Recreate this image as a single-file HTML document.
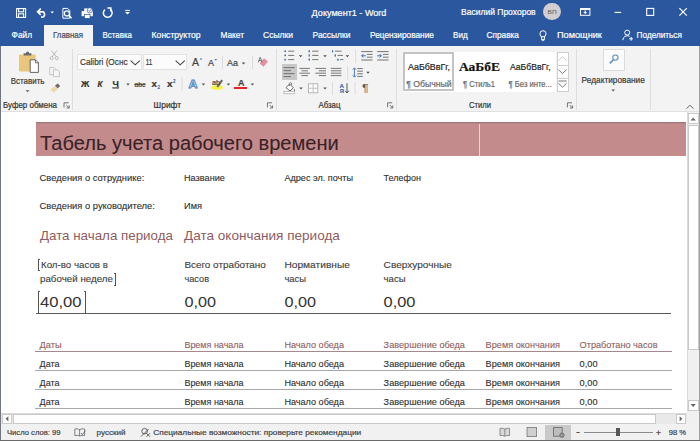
<!DOCTYPE html>
<html lang="ru"><head><meta charset="utf-8"><title>Документ1 - Word</title>
<style>
html,body{margin:0;padding:0;background:#fff}
#w{position:relative;width:700px;height:441px;overflow:hidden;background:#fff}
.t{-webkit-text-stroke:0.2px;position:absolute;white-space:nowrap;transform-origin:0 50%;display:block}
.r{position:absolute}
#ic,#tx{position:absolute;left:0;top:0;width:700px;height:441px}
#tx text{font-family:'Liberation Sans',sans-serif;white-space:pre}
#tx text.s{font-family:'Liberation Serif',serif}
</style></head><body><div id="w">
<div class="r" style="left:0px;top:0px;width:700px;height:46px;background:#2a579d;"></div>
<div class="r" style="left:0px;top:46px;width:700px;height:65px;background:#f3f3f3;"></div>
<div class="r" style="left:0px;top:111px;width:700px;height:1px;background:#e0e0e0;"></div>
<div class="r" style="left:44px;top:25px;width:49px;height:22px;background:#f3f3f3;"></div>
<div class="r" style="left:543.2px;top:2.9px;width:17.6px;height:17.6px;background:#d2ced0;border-radius:50%"></div>
<div class="r" style="left:71.5px;top:49px;width:1px;height:60.5px;background:#dedede;"></div>
<div class="r" style="left:275.6px;top:49px;width:1px;height:60.5px;background:#dedede;"></div>
<div class="r" style="left:395.6px;top:49px;width:1px;height:60.5px;background:#dedede;"></div>
<div class="r" style="left:576px;top:49px;width:1px;height:60.5px;background:#dedede;"></div>
<div class="r" style="left:650.4px;top:49px;width:1px;height:60.5px;background:#dedede;"></div>
<div class="r" style="left:77.3px;top:54px;width:65px;height:16px;background:#fcfcfc;border:1px solid #e2e2e2;box-sizing:border-box"></div>
<div class="r" style="left:143.3px;top:54px;width:44px;height:16px;background:#fcfcfc;border:1px solid #e2e2e2;box-sizing:border-box"></div>
<div class="r" style="left:234.4px;top:86.6px;width:12.6px;height:2.6px;background:#e8202a;"></div>
<div class="r" style="left:211px;top:84.5px;width:12px;height:5.5px;background:#f4f24e;border-radius:50%"></div>
<div class="r" style="left:403px;top:52px;width:153px;height:40px;background:#fff;"></div>
<div class="r" style="left:403px;top:52px;width:50.5px;height:38.6px;background:#fff;border:2px solid #c4c4c4;box-sizing:border-box"></div>
<div class="r" style="left:556.5px;top:52px;width:12px;height:40px;background:#fff;border:1px solid #cfcfcf;box-sizing:border-box"></div>
<div class="r" style="left:556.5px;top:64.5px;width:12px;height:1px;background:#cfcfcf;"></div>
<div class="r" style="left:556.5px;top:78px;width:12px;height:1px;background:#cfcfcf;"></div>
<div class="r" style="left:602.5px;top:48.5px;width:22.5px;height:22px;background:#fbfbfb;border:1px solid #dcdcdc;box-sizing:border-box"></div>
<div class="r" style="left:281.5px;top:64px;width:15.5px;height:16px;background:#c8c8c8;"></div>
<div class="r" style="left:0px;top:112px;width:700px;height:301px;background:#fff;"></div>
<div class="r" style="left:35.5px;top:122px;width:650px;height:34px;background:#c48b8d;"></div>
<div class="r" style="left:479px;top:122px;width:1px;height:34px;background:#ecd9d9;"></div>
<div class="r" style="left:35.5px;top:122px;width:650px;height:1px;background:#a07678;"></div>
<div class="r" style="left:35.5px;top:123px;width:650px;height:1px;background:#b98688;"></div>
<div class="r" style="left:36px;top:313px;width:635px;height:1px;background:#5a5a5a;"></div>
<div class="r" style="left:38.4px;top:259px;width:2px;height:11.5px;border-left:1px solid #555;border-top:1px solid #555;border-bottom:1px solid #555;box-sizing:border-box"></div>
<div class="r" style="left:113.5px;top:273px;width:2px;height:13px;border-right:1px solid #555;border-top:1px solid #555;border-bottom:1px solid #555;box-sizing:border-box"></div>
<div class="r" style="left:38.4px;top:291px;width:2px;height:22.5px;border-left:1px solid #555;border-top:1px solid #555;border-bottom:1px solid #555;box-sizing:border-box"></div>
<div class="r" style="left:83.5px;top:291px;width:2px;height:22.5px;border-right:1px solid #555;border-top:1px solid #555;border-bottom:1px solid #555;box-sizing:border-box"></div>
<div class="r" style="left:35px;top:351px;width:637px;height:1px;background:#a58a8d;"></div>
<div class="r" style="left:35px;top:370px;width:637px;height:1px;background:#a8a8a8;"></div>
<div class="r" style="left:35px;top:389px;width:637px;height:1px;background:#a8a8a8;"></div>
<div class="r" style="left:35px;top:408px;width:637px;height:1px;background:#a8a8a8;"></div>
<div class="r" style="left:687px;top:112px;width:12px;height:301px;background:#f0f0f0;border-left:1px solid #dadada;box-sizing:border-box"></div>
<div class="r" style="left:688px;top:113px;width:10.5px;height:11px;background:#fff;border:1px solid #c9c9c9;box-sizing:border-box"></div>
<div class="r" style="left:688px;top:125px;width:10.5px;height:224.5px;background:#fff;border:1px solid #c9c9c9;box-sizing:border-box"></div>
<div class="r" style="left:688px;top:400px;width:10.5px;height:10.5px;background:#fff;border:1px solid #c9c9c9;box-sizing:border-box"></div>
<div class="r" style="left:1px;top:413px;width:686px;height:11px;background:#e9e9e9;border-top:1px solid #dadada;box-sizing:border-box"></div>
<div class="r" style="left:2px;top:414px;width:10px;height:9.5px;background:#fff;border:1px solid #c9c9c9;box-sizing:border-box"></div>
<div class="r" style="left:12.5px;top:414px;width:643px;height:9.5px;background:#fff;border:1px solid #c9c9c9;box-sizing:border-box"></div>
<div class="r" style="left:675.5px;top:414px;width:10.5px;height:9.5px;background:#fff;border:1px solid #c9c9c9;box-sizing:border-box"></div>
<div class="r" style="left:687px;top:411px;width:13px;height:13px;background:#f0f0f0;"></div>
<div class="r" style="left:0px;top:424px;width:700px;height:17px;background:#f1f1f1;"></div>
<div class="r" style="left:545.4px;top:424.5px;width:25.6px;height:15.5px;background:#c9c9c9;"></div>
<div class="r" style="left:583.8px;top:432.3px;width:69.2px;height:1px;background:#8a8a8a;"></div>
<div class="r" style="left:615.8px;top:427.6px;width:3.8px;height:8.8px;background:#555;"></div>
<div class="r" style="left:0px;top:46px;width:1px;height:395px;background:#70757f;"></div>
<div class="r" style="left:699px;top:46px;width:1px;height:395px;background:#a0a0a0;"></div>
<div class="r" style="left:0px;top:440px;width:700px;height:1px;background:#6a6a6a;"></div>
<svg id="ic" viewBox="0 0 700 441" width="700" height="441" fill="none" stroke-linecap="butt">
<!-- title bar QAT -->
<g stroke="#fff" stroke-width="1.1" fill="none">
<rect x="16.6" y="8.6" width="9" height="8.8"/>
<rect x="18.6" y="8.6" width="5" height="3.2" fill="#2a579d"/>
<rect x="18.6" y="13.8" width="5" height="3.6" fill="#2a579d"/>
<path d="M38.2 11.8 H43.2 A3.4 3.2 0 0 1 43.2 17 H41" stroke-width="1.7"/>
<path d="M40.8 8.6 L37.6 11.8 L40.8 15" stroke-width="1.7"/>
<path d="M50.4 11.6 H54 L52.2 13.6 Z" fill="#fff" stroke="none"/>
<path d="M62.9 8.4 H67.6 L69.8 10.6 V18.2 H62.9 Z" stroke-width="1"/>
<circle cx="66.9" cy="13.4" r="2.5" fill="#2a579d" stroke-width="1.2"/>
<path d="M68.7 15.3 L71.6 18.3" stroke-width="1.4"/>
<!-- quick print -->
<rect x="82" y="11.6" width="10.4" height="4.2" fill="#fff" stroke-width="0.8"/>
<rect x="84.2" y="8.4" width="5.4" height="3.4" fill="#fff" stroke="none"/>
<rect x="84.6" y="14.6" width="5.4" height="3.8" fill="#fff" stroke="#2a579d" stroke-width="0.7"/>
<circle cx="89.8" cy="10.4" r="2.6" fill="#fff" stroke="#2a579d" stroke-width="0.7"/>
<path d="M88.6 10.4 L89.5 11.4 L91.1 9.3" stroke="#2a579d" stroke-width="0.8"/>
<!-- repeat -->
<path d="M104.9 9.6 A4.4 4.4 0 1 0 110.3 9.4" stroke-width="1.5"/>
<path d="M107.4 8 H110.9 V11.6" stroke-width="1.4"/>
<!-- customize -->
<path d="M125.2 10.4 H129.8" stroke-width="1"/>
<path d="M125 12 H130 L127.5 14.6 Z" fill="#fff" stroke="none"/>
<!-- window controls -->
<rect x="580.5" y="8.5" width="9.4" height="6.8" stroke-width="1"/>
<path d="M580.5 9.2 H589.9" stroke-width="1.6"/>
<path d="M583.2 12 H587.2 L585.2 14 Z" fill="#fff" stroke="none"/>
<path d="M585.2 10.4 V12.4" stroke-width="1.2"/>
<path d="M614.6 12.4 H621.2" stroke-width="1.1"/>
<rect x="646.7" y="8.4" width="7" height="7" stroke-width="1.1"/>
<path d="M679.4 8.2 L686.8 15.6 M686.8 8.2 L679.4 15.6" stroke-width="1.2"/>
<!-- bulb -->
<circle cx="543" cy="33.8" r="3.1" stroke-width="1"/>
<path d="M541.6 36.4 V39.6 H544.4 V36.4" stroke-width="1" />
<path d="M541.8 40.6 H544.2" stroke-width="0.8"/>
<!-- share person -->
<circle cx="627.2" cy="32.6" r="2.5" stroke-width="1"/>
<path d="M622.8 40.2 A4.6 4.6 0 0 1 629.5 36.2" stroke-width="1"/>
<path d="M629.2 38.8 H633 M631.1 36.9 V40.7" stroke-width="1"/>
</g>

<rect x="19" y="54.6" width="16.6" height="17" rx="1" fill="#eac67c" stroke="none"/>
<path d="M23.6 55.4 V53.2 H26 A1.6 1.6 0 0 1 29.2 53.2 H31.4 V55.4 Z" fill="#6a6a6a" stroke="none"/>
<path d="M30.2 59.8 H35.4 L38.4 62.8 V72.4 H30.2 Z" fill="#fff" stroke="#555" stroke-width="0.9"/>
<path d="M35.4 59.8 V62.8 H38.4" fill="none" stroke="#555" stroke-width="0.8"/>
<path d="M25.7 90.2 H29.3 L27.5 92.2 Z" fill="#555" stroke="none"/>
<g stroke="#b4b4b4" stroke-width="0.9" fill="none"><path d="M51.4 50.6 L56.6 57 M57 50.6 L51.8 57"/><circle cx="51.6" cy="58.2" r="1.5"/><circle cx="56.8" cy="58.2" r="1.5"/></g>
<g stroke="#b9b9b9" stroke-width="0.8" fill="#f6f6f6"><path d="M49.8 67.4 H54 L55.8 69.2 V74.6 H49.8 Z"/><path d="M53.4 69.8 H57.6 L59.4 71.6 V76.6 H53.4 Z"/></g>
<g><path d="M50.4 89.6 L54.8 86 L57.6 89.2 L53.6 92.8 Z" fill="#ecd9a6" stroke="none"/><path d="M55 85.6 L57.8 83.4 L60.2 86 L57.6 88.6 Z" fill="#6b6b6b" stroke="none"/></g>
<path d="M64 107.39999999999999 V102.8 H68.6" stroke="#666" stroke-width="0.9" fill="none"/><path d="M66.2 105.0 L69 107.8 M69.2 105.39999999999999 V108.0 H66.6" stroke="#666" stroke-width="0.9" fill="none"/>
<g stroke="#444" stroke-width="1.1" fill="none"><path d="M130.6 60.6 L135.2 64.8 L139.8 60.6"/><path d="M175.6 60.6 L180.2 64.8 L184.8 60.6"/></g>
<path d="M199.6 59.6 L201 58 L202.4 59.6 Z" fill="#3b6fb5" stroke="none"/>
<path d="M214.4 59 L215.8 60.6 L217.2 59 Z" fill="#3b6fb5" stroke="none"/>
<rect x="222" y="56" width="1" height="13" fill="#dcdcdc" stroke="none"/><rect x="252" y="56" width="1" height="13" fill="#dcdcdc" stroke="none"/><rect x="181.5" y="78" width="1" height="13" fill="#dcdcdc" stroke="none"/>
<path d="M241.7 62.4 H245.3 L243.5 64.4 Z" fill="#555" stroke="none"/>
<g><path d="M259.6 63.6 L264 58.2 L268 61.4 L263.6 66.8 Z" fill="#e58fa0" stroke="none"/><path d="M258.2 62.4 L260.2 57.2 L262.2 62.4 M259 60.6 H261.4" stroke="#666" stroke-width="0.9" fill="none"/></g>
<path d="M126.2 83.6 H129.8 L128 85.6 Z" fill="#555" stroke="none"/>
<path d="M201.6 83.6 H205.2 L203.4 85.6 Z" fill="#555" stroke="none"/>
<path d="M226.6 83.6 H230.2 L228.4 85.6 Z" fill="#555" stroke="none"/>
<path d="M250.6 83.6 H254.2 L252.4 85.6 Z" fill="#555" stroke="none"/>
<path d="M216.4 86.6 L221.4 79.6 L223 80.8 L218.2 87.6 Z" fill="#666" stroke="none"/>
<path d="M267.4 107.39999999999999 V102.8 H272.0" stroke="#666" stroke-width="0.9" fill="none"/><path d="M269.59999999999997 105.0 L272.4 107.8 M272.59999999999997 105.39999999999999 V108.0 H270.0" stroke="#666" stroke-width="0.9" fill="none"/>
<g stroke="#666" stroke-width="0.9" fill="none"><path d="M288.2 51.2 H294.2"/><rect x="284.4" y="50.400000000000006" width="1.6" height="1.6" fill="#3b6fb5" stroke="none"/><path d="M288.2 55.4 H294.2"/><rect x="284.4" y="54.6" width="1.6" height="1.6" fill="#3b6fb5" stroke="none"/><path d="M288.2 59.6 H294.2"/><rect x="284.4" y="58.800000000000004" width="1.6" height="1.6" fill="#3b6fb5" stroke="none"/><path d="M312.2 51.2 H318.4"/><rect x="308.6" y="50.0" width="1.2" height="2.4" fill="#3b6fb5" stroke="none"/><path d="M312.2 55.4 H318.4"/><rect x="308.6" y="54.199999999999996" width="1.2" height="2.4" fill="#3b6fb5" stroke="none"/><path d="M312.2 59.6 H318.4"/><rect x="308.6" y="58.4" width="1.2" height="2.4" fill="#3b6fb5" stroke="none"/><path d="M335 51.2 H341.6 M337.6 55.4 H343 M340 59.6 H343.4"/><rect x="332" y="50.2" width="1.2" height="2.2" fill="#3b6fb5" stroke="none"/><rect x="334.6" y="54.4" width="1.4" height="2.2" fill="#3b6fb5" stroke="none"/><rect x="337.2" y="58.6" width="1.4" height="2.2" fill="#3b6fb5" stroke="none"/><path d="M361.2 51.6 H372.59999999999997 M366.8 54.4 H372.59999999999997 M366.8 57.2 H372.59999999999997 M361.2 60 H372.59999999999997"/><path d="M365.8 55.8 H361.8 M363.4 54 L361.59999999999997 55.8 L363.4 57.6" stroke="#3b6fb5" stroke-width="1"/><path d="M377.2 51.6 H388.59999999999997 M382.8 54.4 H388.59999999999997 M382.8 57.2 H388.59999999999997 M377.2 60 H388.59999999999997"/><path d="M377.2 55.8 H381.2 M379.59999999999997 54 L381.4 55.8 L379.59999999999997 57.6" stroke="#3b6fb5" stroke-width="1"/><path d="M283.6 67.6 H294.4 M283.6 70.6 H291 M283.6 73.6 H294.4 M283.6 76.6 H291"/><path d="M299.4 68.4 H310 M301.4 70.8 H308 M299.4 73.2 H310 M301.4 75.6 H308"/><path d="M315.4 68.4 H326 M318.8 70.8 H326 M315.4 73.2 H326 M318.8 75.6 H326"/><path d="M330.8 68.4 H341.4 M330.8 70.8 H341.4 M330.8 73.2 H341.4 M330.8 75.6 H341.4"/><path d="M357.2 68.6 H362.8 M357.2 71.2 H362.8 M357.2 73.8 H362.8 M357.2 76.4 H362.8"/><path d="M354.4 68.4 V76.6 M352.8 69.6 L354.4 67.8 L356 69.6 M352.8 75.4 L354.4 77.2 L356 75.4" stroke="#3b6fb5" stroke-width="0.9"/><path d="M286 87.6 L289.6 84 L293.4 87.8 L290 91 Z" fill="#fff" stroke="#555" stroke-width="0.9"/><path d="M289.4 86 V83.4 A1.2 1.2 0 0 1 291.6 83.4 V85.2" stroke-width="0.8"/><path d="M294.2 88.4 Q295.6 90.4 294.6 91.2 Q293.4 90.8 294.2 88.4 Z" fill="#555" stroke="none"/><rect x="284" y="91.6" width="10.6" height="2.2" fill="#fdfdfd" stroke="#9a9a9a" stroke-width="0.6"/><rect x="308.4" y="83.8" width="9.4" height="9" stroke="#b0b0b0" stroke-width="0.9" fill="#fbfbfb"/><path d="M313.1 83.8 V92.8 M308.4 88.3 H317.8" stroke="#b8b8b8" stroke-width="0.8"/><path d="M347 83.2 V92.6 M345.2 90.8 L347 93 L348.8 90.8" stroke="#555" stroke-width="1"/></g>
<path d="M298.8 55.2 H302.4 L300.6 57.2 Z" fill="#555" stroke="none"/>
<path d="M323.2 55.2 H326.8 L325 57.2 Z" fill="#555" stroke="none"/>
<path d="M345.6 55.2 H349.2 L347.4 57.2 Z" fill="#555" stroke="none"/>
<path d="M366.2 71.8 H369.8 L368 73.8 Z" fill="#555" stroke="none"/>
<path d="M299.2 87.6 H302.8 L301 89.6 Z" fill="#555" stroke="none"/>
<path d="M323.2 87.6 H326.8 L325 89.6 Z" fill="#555" stroke="none"/>
<rect x="355.2" y="49.5" width="1" height="13.5" fill="#dcdcdc" stroke="none"/>
<rect x="347.2" y="66" width="1" height="13.5" fill="#dcdcdc" stroke="none"/>
<rect x="332" y="82" width="1" height="13" fill="#dcdcdc" stroke="none"/>
<rect x="354.6" y="82" width="1" height="13" fill="#dcdcdc" stroke="none"/>
<path d="M387.6 107.39999999999999 V102.8 H392.20000000000005" stroke="#666" stroke-width="0.9" fill="none"/><path d="M389.8 105.0 L392.6 107.8 M392.8 105.39999999999999 V108.0 H390.20000000000005" stroke="#666" stroke-width="0.9" fill="none"/>
<g fill="none" stroke-width="0.9"><path d="M558.4 60.6 L562.5 56.6 L566.6 60.6" stroke="#c4c4c4"/><path d="M558.4 69.6 L562.5 73.6 L566.6 69.6" stroke="#666"/><path d="M558.4 83.2 L562.5 87.2 L566.6 83.2 M558.4 81 H566.6" stroke="#666"/></g>
<path d="M567.4 107.39999999999999 V102.8 H572.0" stroke="#666" stroke-width="0.9" fill="none"/><path d="M569.6 105.0 L572.4 107.8 M572.6 105.39999999999999 V108.0 H570.0" stroke="#666" stroke-width="0.9" fill="none"/>
<g stroke="#5d8fbd" fill="none"><circle cx="615.4" cy="57.6" r="2.6" stroke-width="1.1"/><path d="M613.4 59.8 L609.8 63.4" stroke-width="1.6"/></g>
<path d="M611.4 89.4 H615.0 L613.2 91.4 Z" fill="#555" stroke="none"/>
<path d="M686.6 108.6 L690 105.2 L693.4 108.6" stroke="#666" stroke-width="1" fill="none"/>
<path d="M690.6 120.4 L693.2 117.4 L695.8 120.4 Z" fill="#666" stroke="none"/>
<path d="M690.6 404 L693.2 407 L695.8 404 Z" fill="#666" stroke="none"/>
<path d="M8.4 416.2 L5.6 418.8 L8.4 421.4 Z" fill="#666" stroke="none"/>
<path d="M679.6 416.2 L682.4 418.8 L679.6 421.4 Z" fill="#666" stroke="none"/>
<g stroke="#666" stroke-width="0.8" fill="none"><path d="M79.6 429.6 Q77 428.2 74.8 429 V435.6 Q77 434.8 79.6 436 Q82 434.8 84.6 435.6 V429 Q82 428.2 79.6 429.6 V436"/><path d="M81 433 L82.4 434.6 L85.4 430.6" stroke="#555"/></g>
<g stroke="#555" stroke-width="0.9" fill="none"><circle cx="144.6" cy="431.2" r="2.8"/><path d="M141 436.6 L148.6 429 M146.4 433.2 L150 436.8 M150 433.2 L146.4 436.8"/></g>
<g stroke="#777" stroke-width="0.8" fill="#d8d8d8"><path d="M504.8 429 Q502.4 427.8 500 428.4 V435.6 Q502.4 435 504.8 436.2 Q507.2 435 509.6 435.6 V428.4 Q507.2 427.8 504.8 429 Z"/><path d="M504.8 429 V436.2"/><rect x="527" y="427.4" width="9.6" height="9.2" fill="#cfcfcf"/><rect x="553.6" y="427.6" width="8.6" height="8.6" fill="#bdbdbd" stroke="#666"/><circle cx="562" cy="435.2" r="2.2" fill="#999" stroke="#666"/></g>
</svg>

<svg id="tx" viewBox="0 0 700 441" width="700" height="441">
<text transform="translate(311.60 16.00) scale(0.9866 1)" font-size="9.2" fill="#fff" stroke="#fff" stroke-width="0.2">Документ1 - Word</text>
<text transform="translate(461.00 15.10) scale(0.9260 1)" font-size="9.2" fill="#fff" stroke="#fff" stroke-width="0.2">Василий Прохоров</text>
<text transform="translate(547.60 14.30) scale(1.0492 1)" font-size="6.2" fill="#777" stroke="#777" stroke-width="0.2">ВП</text>
<text transform="translate(11.60 38.40) scale(0.9434 1)" font-size="8.8" fill="#fff" stroke="#fff" stroke-width="0.2">Файл</text>
<text transform="translate(102.60 38.40) scale(0.8990 1)" font-size="8.8" fill="#fff" stroke="#fff" stroke-width="0.2">Вставка</text>
<text transform="translate(151.60 38.40) scale(0.9769 1)" font-size="8.8" fill="#fff" stroke="#fff" stroke-width="0.2">Конструктор</text>
<text transform="translate(220.40 38.40) scale(0.9481 1)" font-size="8.8" fill="#fff" stroke="#fff" stroke-width="0.2">Макет</text>
<text transform="translate(263.00 38.40) scale(0.9687 1)" font-size="8.8" fill="#fff" stroke="#fff" stroke-width="0.2">Ссылки</text>
<text transform="translate(312.60 38.40) scale(0.9573 1)" font-size="8.8" fill="#fff" stroke="#fff" stroke-width="0.2">Рассылки</text>
<text transform="translate(370.00 38.40) scale(0.9423 1)" font-size="8.8" fill="#fff" stroke="#fff" stroke-width="0.2">Рецензирование</text>
<text transform="translate(453.00 38.40) scale(0.9170 1)" font-size="8.8" fill="#fff" stroke="#fff" stroke-width="0.2">Вид</text>
<text transform="translate(486.60 38.40) scale(0.9387 1)" font-size="8.8" fill="#fff" stroke="#fff" stroke-width="0.2">Справка</text>
<text transform="translate(557.00 38.40) scale(1.0446 1)" font-size="8.8" fill="#fff" stroke="#fff" stroke-width="0.2">Помощник</text>
<text transform="translate(636.60 38.40) scale(0.9346 1)" font-size="8.8" fill="#fff" stroke="#fff" stroke-width="0.2">Поделиться</text>
<text transform="translate(53.00 38.40) scale(0.8959 1)" font-size="8.8" fill="#3f4b5e" stroke="#3f4b5e" stroke-width="0.2">Главная</text>
<text transform="translate(3.00 108.10) scale(0.9705 1)" font-size="8.2" fill="#333" stroke="#333" stroke-width="0.2">Буфер обмена</text>
<text transform="translate(153.60 108.10) scale(1.0172 1)" font-size="8.2" fill="#333" stroke="#333" stroke-width="0.2">Шрифт</text>
<text transform="translate(318.40 108.10) scale(0.9578 1)" font-size="8.2" fill="#333" stroke="#333" stroke-width="0.2">Абзац</text>
<text transform="translate(469.00 108.10) scale(0.9325 1)" font-size="8.2" fill="#333" stroke="#333" stroke-width="0.2">Стили</text>
<text transform="translate(10.70 84.00) scale(0.9066 1)" font-size="8.8" fill="#3a3a3a" stroke="#3a3a3a" stroke-width="0.2">Вставить</text>
<text transform="translate(581.60 83.00) scale(0.9460 1)" font-size="8.8" fill="#3a3a3a" stroke="#3a3a3a" stroke-width="0.2">Редактирование</text>
<text transform="translate(80.00 65.00) scale(0.9371 1)" font-size="8.8" fill="#3a3a3a" stroke="#3a3a3a" stroke-width="0.2">Calibri (Оснс</text>
<text transform="translate(145.80 65.00) scale(0.7233 1)" font-size="8.8" fill="#3a3a3a" stroke="#3a3a3a" stroke-width="0.2">11</text>
<text transform="translate(81.03 87.00) scale(1.0459 1)" font-size="8.8" fill="#333" stroke="#333" stroke-width="0.2" font-weight="bold">Ж</text>
<text transform="translate(97.60 87.00) scale(0.9119 1)" font-size="8.8" fill="#333" stroke="#333" stroke-width="0.2" font-weight="bold" font-style="italic">К</text>
<text transform="translate(112.60 86.50) scale(1.0343 1)" font-size="8.8" fill="#333" stroke="#333" stroke-width="0.2" font-weight="bold" text-decoration="underline">Ч</text>
<text transform="translate(134.40 87.00) scale(0.9143 1)" font-size="7.6" fill="#444" stroke="#444" stroke-width="0.2" text-decoration="line-through">abc</text>
<text transform="translate(151.60 87.00) scale(1.0800 1)" font-size="9" fill="#333" stroke="#333" stroke-width="0.2" font-weight="bold">x</text>
<text transform="translate(157.50 88.50) scale(1.0000 1)" font-size="4.5" fill="#2b579a" stroke="#2b579a" stroke-width="0.2">2</text>
<text transform="translate(167.00 87.00) scale(1.1000 1)" font-size="9" fill="#333" stroke="#333" stroke-width="0.2" font-weight="bold">x</text>
<text transform="translate(173.00 83.00) scale(1.0000 1)" font-size="4.5" fill="#2b579a" stroke="#2b579a" stroke-width="0.2">2</text>
<text transform="translate(192.00 65.80) scale(1.0000 1)" font-size="10.5" fill="#444" stroke="#444" stroke-width="0.2">A</text>
<text transform="translate(208.00 65.80) scale(1.0579 1)" font-size="8.5" fill="#444" stroke="#444" stroke-width="0.2">A</text>
<text transform="translate(227.00 65.80) scale(0.9450 1)" font-size="9.5" fill="#444" stroke="#444" stroke-width="0.2">Aa</text>
<text transform="translate(188.60 87.50) scale(1.0827 1)" font-size="11.5" fill="#fff" font-weight="bold" stroke="#4a86c8" stroke-width="0.9">A</text>
<text transform="translate(212.00 84.50) scale(1.0281 1)" font-size="7" fill="#444" stroke="#444" stroke-width="0.2">ab</text>
<text transform="translate(238.00 86.00) scale(0.9476 1)" font-size="9.5" fill="#444" stroke="#444" stroke-width="0.2" font-weight="bold">A</text>
<text transform="translate(339.60 87.60) scale(1.0166 1)" font-size="6" fill="#3b6fb5" stroke="#3b6fb5" stroke-width="0.2" font-weight="bold">А</text>
<text transform="translate(339.80 93.20) scale(0.9739 1)" font-size="6" fill="#3b6fb5" stroke="#3b6fb5" stroke-width="0.2" font-weight="bold">Я</text>
<text transform="translate(362.00 92.20) scale(1.1701 1)" font-size="10.5" fill="#5a5a5a">¶</text>
<text transform="translate(408.00 69.60) scale(1.0109 1)" font-size="8.8" fill="#222" stroke="#222" stroke-width="0.2">АаБбВвГг,</text>
<text transform="translate(406.20 86.70) scale(1.0616 1)" font-size="8.2" fill="#6a6a6a" stroke="#6a6a6a" stroke-width="0.2">¶ Обычный</text>
<text transform="translate(459.00 70.90) scale(1.0081 1)" font-size="13.4" fill="#111" stroke="#111" stroke-width="0.2" font-weight="bold" class="s">АаБбЕ</text>
<text transform="translate(463.00 86.70) scale(0.9275 1)" font-size="8.2" fill="#6a6a6a" stroke="#6a6a6a" stroke-width="0.2">¶ Стиль1</text>
<text transform="translate(510.00 69.60) scale(0.9772 1)" font-size="8.8" fill="#222" stroke="#222" stroke-width="0.2">АаБбВвГг,</text>
<text transform="translate(508.60 86.70) scale(0.9318 1)" font-size="8.2" fill="#6a6a6a" stroke="#6a6a6a" stroke-width="0.2">¶ Без инте...</text>
<text transform="translate(40.00 150.00) scale(1.0301 1)" font-size="19.5" fill="#3a2227" stroke="#3a2227" stroke-width="0.1">Табель учета рабочего времени</text>
<text transform="translate(39.60 181.00) scale(1.1035 1)" font-size="8.5" fill="#2e2e2e" stroke="#2e2e2e" stroke-width="0.1">Сведения о сотруднике:</text>
<text transform="translate(184.00 181.00) scale(1.0794 1)" font-size="8.5" fill="#2e2e2e" stroke="#2e2e2e" stroke-width="0.1">Название</text>
<text transform="translate(284.40 181.00) scale(1.0700 1)" font-size="8.5" fill="#2e2e2e" stroke="#2e2e2e" stroke-width="0.1">Адрес эл. почты</text>
<text transform="translate(383.60 181.00) scale(1.0605 1)" font-size="8.5" fill="#2e2e2e" stroke="#2e2e2e" stroke-width="0.1">Телефон</text>
<text transform="translate(39.60 209.00) scale(1.1025 1)" font-size="8.5" fill="#2e2e2e" stroke="#2e2e2e" stroke-width="0.1">Сведения о руководителе:</text>
<text transform="translate(184.00 209.00) scale(1.0868 1)" font-size="8.5" fill="#2e2e2e" stroke="#2e2e2e" stroke-width="0.1">Имя</text>
<text transform="translate(40.00 240.00) scale(1.0603 1)" font-size="12.6" fill="#8d5c5f">Дата начала периода</text>
<text transform="translate(184.00 240.00) scale(1.0771 1)" font-size="12.6" fill="#8d5c5f">Дата окончания периода</text>
<text transform="translate(41.00 268.00) scale(1.1471 1)" font-size="8.5" fill="#3c3c3c" stroke="#3c3c3c" stroke-width="0.1">Кол-во часов в</text>
<text transform="translate(40.00 282.00) scale(1.1505 1)" font-size="8.5" fill="#3c3c3c" stroke="#3c3c3c" stroke-width="0.1">рабочей неделе</text>
<text transform="translate(184.40 268.00) scale(1.1675 1)" font-size="8.5" fill="#3c3c3c" stroke="#3c3c3c" stroke-width="0.1">Всего отработано</text>
<text transform="translate(184.40 282.00) scale(1.0813 1)" font-size="8.5" fill="#3c3c3c" stroke="#3c3c3c" stroke-width="0.1">часов</text>
<text transform="translate(284.40 268.00) scale(1.1999 1)" font-size="8.5" fill="#3c3c3c" stroke="#3c3c3c" stroke-width="0.1">Нормативные</text>
<text transform="translate(284.40 282.00) scale(1.1068 1)" font-size="8.5" fill="#3c3c3c" stroke="#3c3c3c" stroke-width="0.1">часы</text>
<text transform="translate(383.60 268.00) scale(1.1886 1)" font-size="8.5" fill="#3c3c3c" stroke="#3c3c3c" stroke-width="0.1">Сверхурочные</text>
<text transform="translate(383.60 282.00) scale(1.1273 1)" font-size="8.5" fill="#3c3c3c" stroke="#3c3c3c" stroke-width="0.1">часы</text>
<text transform="translate(40.00 307.00) scale(1.0801 1)" font-size="15.4" fill="#333">40,00</text>
<text transform="translate(184.40 307.00) scale(1.0550 1)" font-size="15.4" fill="#333">0,00</text>
<text transform="translate(284.40 307.00) scale(1.0550 1)" font-size="15.4" fill="#333">0,00</text>
<text transform="translate(383.60 307.00) scale(1.0650 1)" font-size="15.4" fill="#333">0,00</text>
<text transform="translate(39.60 348.00) scale(1.0839 1)" font-size="8.5" fill="#8f5d60" stroke="#8f5d60" stroke-width="0.1">Даты</text>
<text transform="translate(39.60 367.00) scale(1.0622 1)" font-size="8.5" fill="#2e2e2e" stroke="#2e2e2e" stroke-width="0.1">Дата</text>
<text transform="translate(39.60 386.00) scale(1.0622 1)" font-size="8.5" fill="#2e2e2e" stroke="#2e2e2e" stroke-width="0.1">Дата</text>
<text transform="translate(39.60 405.00) scale(1.0622 1)" font-size="8.5" fill="#2e2e2e" stroke="#2e2e2e" stroke-width="0.1">Дата</text>
<text transform="translate(184.40 348.00) scale(1.0568 1)" font-size="8.5" fill="#8f5d60" stroke="#8f5d60" stroke-width="0.1">Время начала</text>
<text transform="translate(184.40 367.00) scale(1.0568 1)" font-size="8.5" fill="#2e2e2e" stroke="#2e2e2e" stroke-width="0.1">Время начала</text>
<text transform="translate(184.40 386.00) scale(1.0568 1)" font-size="8.5" fill="#2e2e2e" stroke="#2e2e2e" stroke-width="0.1">Время начала</text>
<text transform="translate(184.40 405.00) scale(1.0568 1)" font-size="8.5" fill="#2e2e2e" stroke="#2e2e2e" stroke-width="0.1">Время начала</text>
<text transform="translate(284.40 348.00) scale(1.0697 1)" font-size="8.5" fill="#8f5d60" stroke="#8f5d60" stroke-width="0.1">Начало обеда</text>
<text transform="translate(284.40 367.00) scale(1.0697 1)" font-size="8.5" fill="#2e2e2e" stroke="#2e2e2e" stroke-width="0.1">Начало обеда</text>
<text transform="translate(284.40 386.00) scale(1.0697 1)" font-size="8.5" fill="#2e2e2e" stroke="#2e2e2e" stroke-width="0.1">Начало обеда</text>
<text transform="translate(284.40 405.00) scale(1.0697 1)" font-size="8.5" fill="#2e2e2e" stroke="#2e2e2e" stroke-width="0.1">Начало обеда</text>
<text transform="translate(383.60 348.00) scale(1.0775 1)" font-size="8.5" fill="#8f5d60" stroke="#8f5d60" stroke-width="0.1">Завершение обеда</text>
<text transform="translate(383.60 367.00) scale(1.0775 1)" font-size="8.5" fill="#2e2e2e" stroke="#2e2e2e" stroke-width="0.1">Завершение обеда</text>
<text transform="translate(383.60 386.00) scale(1.0775 1)" font-size="8.5" fill="#2e2e2e" stroke="#2e2e2e" stroke-width="0.1">Завершение обеда</text>
<text transform="translate(383.60 405.00) scale(1.0775 1)" font-size="8.5" fill="#2e2e2e" stroke="#2e2e2e" stroke-width="0.1">Завершение обеда</text>
<text transform="translate(485.60 348.00) scale(1.0768 1)" font-size="8.5" fill="#8f5d60" stroke="#8f5d60" stroke-width="0.1">Время окончания</text>
<text transform="translate(485.60 367.00) scale(1.0768 1)" font-size="8.5" fill="#2e2e2e" stroke="#2e2e2e" stroke-width="0.1">Время окончания</text>
<text transform="translate(485.60 386.00) scale(1.0768 1)" font-size="8.5" fill="#2e2e2e" stroke="#2e2e2e" stroke-width="0.1">Время окончания</text>
<text transform="translate(485.60 405.00) scale(1.0768 1)" font-size="8.5" fill="#2e2e2e" stroke="#2e2e2e" stroke-width="0.1">Время окончания</text>
<text transform="translate(579.60 348.00) scale(1.0770 1)" font-size="8.5" fill="#8f5d60" stroke="#8f5d60" stroke-width="0.1">Отработано часов</text>
<text transform="translate(579.60 367.00) scale(1.0878 1)" font-size="8.5" fill="#2e2e2e" stroke="#2e2e2e" stroke-width="0.1">0,00</text>
<text transform="translate(579.60 386.00) scale(1.0878 1)" font-size="8.5" fill="#2e2e2e" stroke="#2e2e2e" stroke-width="0.1">0,00</text>
<text transform="translate(579.60 405.00) scale(1.0878 1)" font-size="8.5" fill="#2e2e2e" stroke="#2e2e2e" stroke-width="0.1">0,00</text>
<text transform="translate(7.00 434.60) scale(0.9699 1)" font-size="7.9" fill="#444" stroke="#444" stroke-width="0.2">Число слов: 99</text>
<text transform="translate(96.60 434.60) scale(1.0243 1)" font-size="7.9" fill="#444" stroke="#444" stroke-width="0.2">русский</text>
<text transform="translate(153.20 434.60) scale(1.0513 1)" font-size="7.9" fill="#444" stroke="#444" stroke-width="0.2">Специальные возможности: проверьте рекомендации</text>
<text transform="translate(668.70 434.60) scale(0.9619 1)" font-size="7.9" fill="#444" stroke="#444" stroke-width="0.2">98 %</text>
<text transform="translate(576.00 435.00) scale(1.3333 1)" font-size="9" fill="#444" stroke="#444" stroke-width="0.2">-</text>
<text transform="translate(656.00 435.50) scale(0.9524 1)" font-size="9" fill="#444" stroke="#444" stroke-width="0.2">+</text>
</svg>
</div></body></html>
